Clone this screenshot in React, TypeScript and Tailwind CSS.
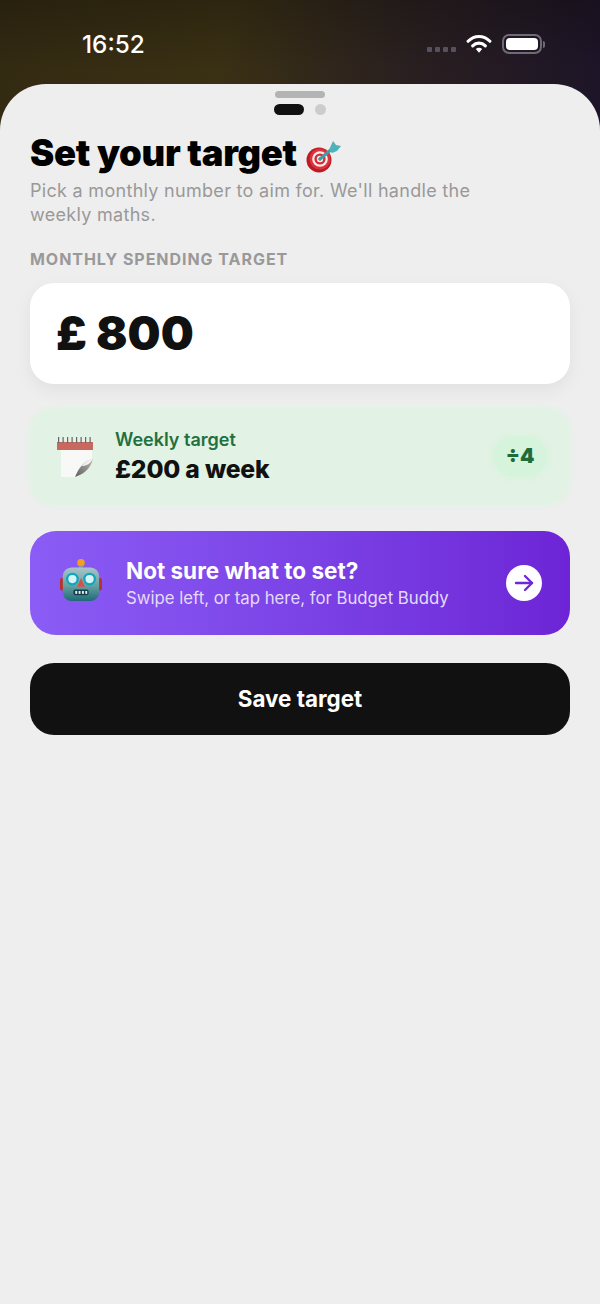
const font = { fontFamily: "Inter, 'Liberation Sans', sans-serif" }

const DartIcon = () => (
  <svg width="40" height="40" viewBox="0 0 40 40" className="shrink-0 mt-[10px]">
    <ellipse cx="17" cy="22" rx="12.5" ry="12.5" fill="#b91c26" />
    <ellipse cx="18" cy="21" rx="10.5" ry="10.5" fill="#e0303a" />
    <circle cx="18" cy="21" r="7.8" fill="#f5efee" />
    <circle cx="18" cy="21" r="5.6" fill="#d92a33" />
    <circle cx="18" cy="21" r="3.2" fill="#f5efee" />
    <circle cx="18" cy="21" r="1.5" fill="#d92a33" />
    <path d="M18 21 L31 10" stroke="#3f9fa8" strokeWidth="3.2" strokeLinecap="round" />
    <path d="M27 12 L31 3 L34 7 L39 8 L35 13 L30 15 Z" fill="#4db3ba" />
  </svg>
)

const CalendarIcon = () => (
  <svg width="36" height="41" viewBox="0 0 36 41" className="shrink-0">
    <defs>
      <linearGradient id="calendarCurl" x1="0" y1="1" x2="1" y2="0">
        <stop offset="0" stopColor="#5e5e5c" />
        <stop offset="1" stopColor="#b8b8b6" />
      </linearGradient>
    </defs>
    <path d="M4 14 H35 V24 C30 28 24 32 19 41 H4 Z" fill="#f8f8f7" />
    <path d="M36 23 C28 24 22 31 18 41 C26 38 33 34 36 23 Z" fill="url(#calendarCurl)" />
    <path d="M36 23 C31 23 27 27 25 30 C29 30 33 28 36 23 Z" fill="#f0f0ef" />
    <rect x="0" y="6" width="36" height="8" fill="#c9685f" />
    {[1, 5.5, 10, 14.5, 19, 23.5, 28, 32.5].map((x) => (
      <rect key={x} x={x} y="1" width="1.2" height="6" fill="#666" />
    ))}
  </svg>
)

const RobotIcon = () => (
  <svg width="42" height="44" viewBox="0 0 44 46" className="shrink-0 mb-[6px]">
    <defs>
      <linearGradient id="robotHead" x1="0" y1="0" x2="0" y2="1">
        <stop offset="0" stopColor="#a9c4c8" />
        <stop offset="0.55" stopColor="#64a0a4" />
        <stop offset="1" stopColor="#1f6a76" />
      </linearGradient>
    </defs>
    <circle cx="22" cy="5" r="4" fill="#f0a020" />
    <rect x="20" y="8" width="4" height="4" fill="#8a9aa0" />
    <rect x="0" y="21" width="5" height="13" rx="2" fill="#b5332f" />
    <rect x="39" y="21" width="5" height="13" rx="2" fill="#b5332f" />
    <rect x="3" y="10" width="38" height="35" rx="9" fill="url(#robotHead)" />
    <circle cx="13" cy="22" r="5.5" fill="#d6f3f5" stroke="#12a5bd" strokeWidth="2.4" />
    <circle cx="31" cy="22" r="5.5" fill="#d6f3f5" stroke="#12a5bd" strokeWidth="2.4" />
    <path d="M22 21 L26 30 L18 30 Z" fill="#d8504a" />
    <rect x="14" y="33" width="16" height="6" rx="2" fill="#14404c" />
    {[16, 19.5, 23, 26.5].map((x) => (
      <rect key={x} x={x} y="34.5" width="2" height="3" fill="#e8eeee" />
    ))}
  </svg>
)

const StatusBar = () => (
  <div className="h-[84px] flex items-start justify-between pl-[82px] pr-[55px] pt-[29px]">
    <span className="text-[24.3px] leading-[30px] font-medium text-white">16:52</span>
    <div className="flex items-center pt-[5px]">
      <div className="flex gap-[3px] mt-[10px] mr-[10px]">
        {[0, 1, 2, 3].map((i) => (
          <div key={i} className="w-[5px] h-[5px] rounded-[1px] bg-[#57505f]" />
        ))}
      </div>
      <svg width="26" height="20" viewBox="0 0 28 22" className="mr-[10px]">
        <path d="M2 8 C9 1 19 1 26 8" fill="none" stroke="#fff" strokeWidth="3.4" strokeLinecap="round" />
        <path d="M7 13 C11 9 17 9 21 13" fill="none" stroke="#fff" strokeWidth="3.4" strokeLinecap="round" />
        <path d="M10.5 16.5 C12.5 14.6 15.5 14.6 17.5 16.5 L14 20.5 Z" fill="#fff" />
      </svg>
      <div className="w-[40px] h-[20px] rounded-[7px] border-2 border-[#6f6a78] p-[2px]">
        <div className="w-full h-full rounded-[4px] bg-white" />
      </div>
      <div className="w-[2px] h-[7px] rounded-r-sm bg-[#6f6a78] ml-[1px]" />
    </div>
  </div>
)

export default function App() {
  return (
    <div
      style={font}
      className="w-[600px] h-[1304px] flex flex-col overflow-hidden bg-[linear-gradient(180deg,rgba(0,0,0,0.22),transparent_70px),linear-gradient(100deg,#332a12_0%,#3a3014_28%,#2a2020_50%,#1d1428_75%,#1a1030_100%)]"
    >
      <StatusBar />
      <div className="flex-1 rounded-t-[46px] bg-[#eeeeee] px-[30px] pt-[7px]">
        {/* Drag handle and pager */}
        <div className="w-[50px] h-[7px] rounded-full bg-[#b4b4b4] mx-auto" />
        <div className="flex items-center justify-center gap-[11px] mt-[6px]">
          <div className="w-[30px] h-[11px] rounded-full bg-[#111111]" />
          <div className="w-[11px] h-[11px] rounded-full bg-[#cccccc]" />
        </div>

        {/* Title */}
        <div className="flex items-center gap-[5px] mt-[15px] h-[46px]">
          <h1 className="text-[36.4px] leading-[46px] font-black text-black tracking-[-0.3px]">Set your target</h1>
          <DartIcon />
        </div>
        <p className="mt-[3px] text-[18px] leading-[24px] tracking-[0.3px] text-[#999999] w-[470px]">
          Pick a monthly number to aim for. We'll handle the weekly maths.
        </p>

        <div className="mt-[22px] text-[16px] leading-[20px] font-bold tracking-[0.96px] text-[#999999]">
          MONTHLY SPENDING TARGET
        </div>

        {/* Amount input */}
        <div className="mt-[14px] h-[101px] rounded-[24px] bg-white px-[26px] flex items-center shadow-[0_6px_18px_rgba(0,0,0,0.06)]">
          <span className="text-[46.5px] font-black text-[#111111] leading-none">£ 800</span>
        </div>

        {/* Weekly target */}
        <div className="mt-[24px] h-[97px] rounded-[24px] bg-[#e2f2e4] pl-[27px] pr-[23px] flex items-center shadow-[0_0_8px_#e2f2e4]">
          <CalendarIcon />
          <div className="ml-[22px] flex-1">
            <div className="text-[18px] leading-[22px] font-semibold text-[#23703f]">Weekly target</div>
            <div className="mt-[2px] text-[24.7px] leading-[32px] font-extrabold text-[#111111] tracking-[-0.2px]">£200 a week</div>
          </div>
          <div className="w-[54px] h-[41px] rounded-[20px] bg-[#d6f4dc] flex items-center justify-center text-[20.5px] font-black text-[#1f6b3b] shadow-[0_0_6px_#d6f4dc]">
            ÷4
          </div>
        </div>

        {/* Budget Buddy */}
        <div className="mt-[26px] h-[104px] rounded-[26px] bg-gradient-to-r from-[#8b5cf6] to-[#6d24d6] pl-[30px] pr-[28px] flex items-center">
          <RobotIcon />
          <div className="ml-[24px] flex-1">
            <div className="text-[22.5px] leading-[28px] font-bold text-white">Not sure what to set?</div>
            <div className="text-[16.75px] leading-[24px] font-normal text-[#e6dafc] mt-[1px]">
              Swipe left, or tap here, for Budget Buddy
            </div>
          </div>
          <div className="w-[36px] h-[36px] rounded-full bg-white flex items-center justify-center">
            <svg width="22" height="22" viewBox="0 0 22 22" fill="none" stroke="#6d28d9" strokeWidth="2.4" strokeLinecap="round" strokeLinejoin="round">
              <path d="M3 11 H19" />
              <path d="M12 4 L19 11 L12 18" />
            </svg>
          </div>
        </div>

        {/* Save */}
        <div className="mt-[28px] h-[72px] rounded-[24px] bg-[#111111] flex items-center justify-center text-[22.4px] font-bold text-white">
          Save target
        </div>
      </div>
    </div>
  )
}
